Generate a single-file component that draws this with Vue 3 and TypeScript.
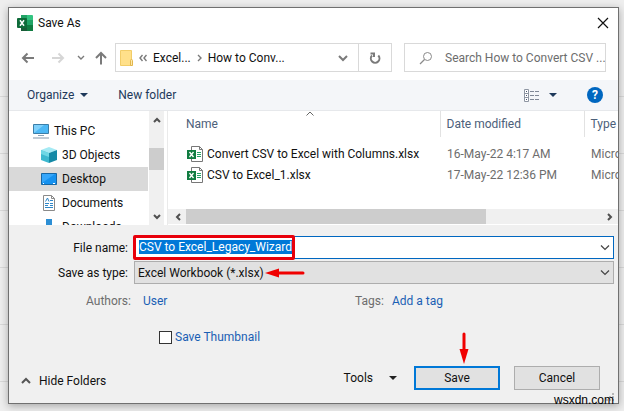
<script setup lang="ts">
import { onMounted, ref } from 'vue'

interface Place {
  name: string
  icon: 'pc' | 'cube' | 'desktop' | 'document' | 'download'
  nested: boolean
}

interface FileRow {
  name: string
  modified: string
  type: string
}

const places: Place[] = [
  { name: 'This PC', icon: 'pc', nested: false },
  { name: '3D Objects', icon: 'cube', nested: true },
  { name: 'Desktop', icon: 'desktop', nested: true },
  { name: 'Documents', icon: 'document', nested: true },
  { name: 'Downloads', icon: 'download', nested: true },
]

const files: FileRow[] = [
  { name: 'Convert CSV to Excel with Columns.xlsx', modified: '16-May-22 4:17 AM', type: 'Micro' },
  { name: 'CSV to Excel_1.xlsx', modified: '17-May-22 12:36 PM', type: 'Micro' },
]

const selectedPlace = ref('Desktop')
const fileName = ref('CSV to Excel_Legacy_Wizard')
const fileType = ref('Excel Workbook (*.xlsx)')
const search = ref('')
const thumbnail = ref(false)
const nameField = ref<HTMLInputElement | null>(null)

onMounted(() => {
  nameField.value?.focus()
  nameField.value?.select()
})
</script>

<template>
  <div class="page">
    <main class="dialog">
      <header class="titlebar">
        <svg class="app-icon" width="16" height="16" viewBox="0 0 16 16">
          <path d="M4 0h6v8H4z" fill="#21a366" />
          <path d="M10 0h5a1 1 0 0 1 1 1v4h-6z" fill="#33c481" />
          <path d="M4 5h6v6H4z" fill="#107c41" />
          <path d="M10 5h6v5h-6z" fill="#21a366" />
          <path d="M10 10h6v6h-6z" fill="#107c41" />
          <path d="M4 10h6v6H4z" fill="#185c37" />
          <rect x="0" y="3" width="10" height="10" rx="1" fill="#0e6b39" />
          <path d="M3 5.2 7 10.8M7 5.2 3 10.8" stroke="#fff" stroke-width="1.5" />
        </svg>
        <h1>Save As</h1>
        <button class="close" aria-label="Close">
          <svg width="12" height="12" viewBox="0 0 12 12">
            <path d="M1 1l10 10M11 1 1 11" stroke="#111" stroke-width="1.2" />
          </svg>
        </button>
      </header>

      <div class="navbar">
        <div class="history">
          <button aria-label="Back">
            <svg width="14" height="12" viewBox="0 0 14 12" class="line">
              <path d="M13 6H2M6.500 1.500 2 6l4.500 4.500" />
            </svg>
          </button>
          <button aria-label="Forward" class="faded">
            <svg width="14" height="12" viewBox="0 0 14 12" class="line">
              <path d="M1 6h11M7.500 1.500 12 6l-4.500 4.500" />
            </svg>
          </button>
          <button aria-label="Recent locations" class="recent">
            <svg width="8" height="12" viewBox="0 0 8 12" class="line thin">
              <path d="M1 4l3 3 3-3" />
            </svg>
          </button>
          <button aria-label="Up">
            <svg width="12" height="14" viewBox="0 0 12 14" class="line">
              <path d="M6 13.500V2M1 7l5-5 5 5" />
            </svg>
          </button>
        </div>
        <nav class="address" aria-label="Address">
          <svg width="14" height="16" viewBox="0 0 14 16">
            <path d="M.5.5h11v15H.5z" fill="#ffe08a" stroke="#f2cd68" />
            <path d="M10.500 10.500q0-1 1-1t1 1v5h-2z" fill="#ffe9a8" stroke="#e2b64d" />
          </svg>
          <svg class="crumb-back line thin" width="8" height="8" viewBox="0 0 8 8">
            <path d="M3.500 1 1 4l2.500 3M7.500 1 5 4l2.500 3" />
          </svg>
          <button class="crumb">Excel...</button>
          <svg class="crumb-next line thin" width="6" height="8" viewBox="0 0 6 8">
            <path d="M1 1l3 3-3 3" />
          </svg>
          <button class="crumb">How to Conv...</button>
          <button class="crumb-menu" aria-label="Previous locations">
            <svg width="10" height="8" viewBox="0 0 10 8" class="line">
              <path d="M1 2l4 4 4-4" />
            </svg>
          </button>
          <button class="refresh" aria-label="Refresh">
            <svg width="12" height="14" viewBox="0 0 12 14" class="line">
              <path d="M3 4.500A4.300 4.300 0 1 0 9.300 4.500" />
              <path d="M1.500 2.500h3.500V6" />
            </svg>
          </button>
        </nav>
        <label class="search">
          <svg width="14" height="14" viewBox="0 0 14 14">
            <circle cx="8.500" cy="5.500" r="4" fill="none" stroke="#8a8a8a" />
            <path d="M5.500 8.500 1 13" stroke="#8a8a8a" stroke-width="1.200" />
          </svg>
          <input v-model="search" type="text" aria-label="Search" placeholder="Search How to Convert CSV ..." />
        </label>
      </div>

      <div class="toolbar">
        <button>Organize <i class="triangle"></i></button>
        <button>New folder</button>
        <button class="view" aria-label="Change view">
          <svg width="16" height="13" viewBox="0 0 16 13">
            <path d="M.5.5h4v12h-4zM.5 4.500h4M.5 8.500h4" fill="#fff" stroke="#8e96a3" />
            <path d="M2 2.500h1M2 6.500h1M2 10.500h1" stroke="#44506a" />
            <path d="M6 2.500h4m1 0h4M6 6.500h4m1 0h4M6 10.500h4m1 0h4" stroke="#808896" />
          </svg>
          <i class="triangle"></i>
        </button>
        <button class="help" aria-label="Help">?</button>
      </div>

      <div class="browser">
        <aside class="places">
          <ul>
            <li v-for="place in places" :key="place.name">
              <button
                :class="{ nested: place.nested, selected: place.name === selectedPlace }"
                @click="selectedPlace = place.name"
              >
                <svg v-if="place.icon === 'pc'" width="16" height="16" viewBox="0 0 16 16">
                  <path d="M.5 1.500h15v9H.5z" fill="#4db8f5" stroke="#3b7ea8" />
                  <path d="M1 10V2h10z" fill="#7fd0fb" />
                  <path d="M5 12.500h6" stroke="#8ba3b5" />
                  <path d="M0 15h16" stroke="#8397aa" />
                </svg>
                <svg v-else-if="place.icon === 'cube'" width="16" height="16" viewBox="0 0 16 16">
                  <path d="M0 3 8 0l8 3-8 3z" fill="#a5eaf4" />
                  <path d="M0 3l8 3v10l-8-3z" fill="#3cb8cf" />
                  <path d="M16 3 8 6v10l8-3z" fill="#1489a6" />
                  <path d="M0 3l8 3v4l-8-3z" fill="#6ed7e5" />
                </svg>
                <svg v-else-if="place.icon === 'desktop'" width="16" height="16" viewBox="0 0 16 16">
                  <path d="M.5 2.500h15v11H.5z" fill="#1591ef" stroke="#1767a5" />
                  <path d="M1 12 14 3H1z" fill="#35a6fa" />
                  <path d="M2 12.500h1m9 0h2" stroke="#fff" />
                </svg>
                <svg v-else-if="place.icon === 'document'" width="16" height="16" viewBox="0 0 16 16">
                  <path d="M2.500.5h8l3 3v12h-11z" fill="#fff" stroke="#8a8a8a" />
                  <path d="M10.500.5v3h3" fill="none" stroke="#8a8a8a" />
                  <path d="M4.500 6.500 6.500 3l1.500 3.500M9 5.500h3M4 8.500h4m1 0h3M4 10.500h3m2 0h3M4 12.500h8" fill="none" stroke="#2f87c8" />
                </svg>
                <svg v-else width="16" height="16" viewBox="0 0 16 16">
                  <path d="M5 0h6v7h3l-6 6-6-6h3z" fill="#2d8fd5" />
                </svg>
                <span>{{ place.name }}</span>
              </button>
            </li>
          </ul>
          <div class="scroll-v">
            <svg width="8" height="6" viewBox="0 0 8 6" class="line scroll-arrow"><path d="M1 5l3-3 3 3" /></svg>
            <div class="thumb"></div>
            <svg width="8" height="6" viewBox="0 0 8 6" class="line scroll-arrow"><path d="M1 1l3 3 3-3" /></svg>
          </div>
        </aside>

        <section class="files">
          <svg class="sort" width="8" height="5" viewBox="0 0 8 5"><path d="M.5 4.500 4 1l3.500 3.500" fill="none" stroke="#666" /></svg>
          <table>
            <thead>
              <tr>
                <th class="col-name">Name</th>
                <th class="col-date">Date modified</th>
                <th class="col-type">Type</th>
              </tr>
            </thead>
            <tbody>
              <tr v-for="file in files" :key="file.name">
                <td class="name">
                  <div class="file">
                    <svg width="16" height="16" viewBox="0 0 16 16">
                      <path d="M4.500.5h8l3 3v12h-11z" fill="#fff" stroke="#777" />
                      <path d="M12.500.5v3h3" fill="none" stroke="#777" />
                      <path d="M10 6.500h4M10 8.500h4M10 10.500h4" stroke="#21a366" />
                      <rect x="0" y="4" width="9" height="9" fill="#107c41" />
                      <path d="M2.500 6l4 5M6.500 6l-4 5" stroke="#fff" stroke-width="1.300" />
                    </svg>
                    <span>{{ file.name }}</span>
                  </div>
                </td>
                <td>{{ file.modified }}</td>
                <td>{{ file.type }}</td>
              </tr>
            </tbody>
          </table>
          <div class="scroll-h">
            <svg width="6" height="8" viewBox="0 0 6 8" class="line scroll-arrow"><path d="M5 1 2 4l3 3" /></svg>
            <div class="track"><div class="thumb"></div></div>
            <svg width="6" height="8" viewBox="0 0 6 8" class="line scroll-arrow"><path d="M1 1l3 3-3 3" /></svg>
          </div>
        </section>
      </div>

      <form class="form" @submit.prevent>
        <div class="field">
          <label for="file-name">File name:</label>
          <div class="combo">
            <input id="file-name" ref="nameField" v-model="fileName" type="text" spellcheck="false" autocomplete="off" />
            <div class="callout"></div>
            <svg class="chevron" width="10" height="6" viewBox="0 0 10 6"><path d="M1 .5l4 4 4-4" /></svg>
          </div>
        </div>
        <div class="field">
          <label for="file-type">Save as type:</label>
          <div class="combo">
            <select id="file-type" v-model="fileType">
              <option>Excel Workbook (*.xlsx)</option>
            </select>
            <svg class="arrow-left" width="40" height="10" viewBox="0 0 40 10">
              <path d="M12 5h26" stroke="#f00000" stroke-width="3" stroke-linecap="round" />
              <path d="M0 5 14 .5v9z" fill="#f00000" />
            </svg>
            <svg class="chevron" width="10" height="6" viewBox="0 0 10 6"><path d="M1 .5l4 4 4-4" /></svg>
          </div>
        </div>
        <dl class="meta">
          <div class="authors">
            <dt>Authors:</dt>
            <dd><a href="#">User</a></dd>
          </div>
          <div class="tags">
            <dt>Tags:</dt>
            <dd><a href="#">Add a tag</a></dd>
          </div>
        </dl>
        <label class="check">
          <input v-model="thumbnail" type="checkbox" />
          <span>Save Thumbnail</span>
        </label>

        <footer class="actions">
          <button type="button" class="plain hide">
            <svg width="10" height="8" viewBox="0 0 10 8" class="line strong"><path d="M1 6l4-4 4 4" /></svg>
            Hide Folders
          </button>
          <button type="button" class="plain tools">Tools <i class="triangle dark"></i></button>
          <div class="save-wrap">
            <svg class="arrow-down" width="10" height="34" viewBox="0 0 10 34">
              <path d="M5 3v17" stroke="#f00000" stroke-width="3" stroke-linecap="round" />
              <path d="M5 33 .5 18h9z" fill="#f00000" />
            </svg>
            <button type="submit" class="push primary">Save</button>
          </div>
          <button type="button" class="push">Cancel</button>
        </footer>
      </form>
      <svg class="grip" width="8" height="8" viewBox="0 0 8 8">
        <path d="M6 0h2v2H6zM3 3h2v2H3zM6 3h2v2H6zM0 6h2v2H0zM3 6h2v2H3zM6 6h2v2H6z" fill="#b8b8b8" />
      </svg>
      <span class="watermark">wsxdn.com</span>
    </main>
  </div>
</template>

<style>
body {
  margin: 0;
}
</style>

<style scoped>
* {
  box-sizing: border-box;
}

.page {
  min-height: 100vh;
  padding: 7px 5px 7px 8px;
  background:
    linear-gradient(#eeeeee, #eeeeee) top / 100% 90px no-repeat,
    repeating-linear-gradient(to bottom, #eeeeee 0 39px, #d9d9d9 39px 40px, #eeeeee 40px 57px);
  color: #111;
  font: 12px/16px Roboto, 'Open Sans', sans-serif;
}

.dialog {
  position: relative;
  border: 1px solid #707070;
  background: #f0f0f0;
  box-shadow: 0 2px 8px rgba(0, 0, 0, 0.3);
}

button,
input,
select {
  margin: 0;
  padding: 0;
  border: 0;
  border-radius: 0;
  background: none;
  color: inherit;
  font: inherit;
}

svg {
  flex: none;
  display: block;
}

.line {
  fill: none;
  stroke: #7a7a7a;
  stroke-width: 2;
}

.thin {
  stroke-width: 1.4;
}

.strong {
  stroke: #555;
}

.triangle {
  width: 0;
  border: 4px solid transparent;
  border-top-color: #1e395b;
  border-bottom: 0;
}

.triangle.dark {
  border-top-color: #222;
}

.titlebar {
  display: flex;
  align-items: center;
  gap: 5px;
  height: 35px;
  padding: 0 9px 6px 8px;
  background: #fff;
}

h1 {
  flex: 1;
  margin: 0;
  font: inherit;
}

.navbar {
  display: flex;
  height: 37px;
  padding: 0 12px 8px 12px;
  background: #fff;
}

.history {
  display: flex;
  align-items: center;
  gap: 10px;
  width: 94px;
}

.history .faded {
  margin: 0 2px 0 6px;
  opacity: 0.3;
}

.address {
  display: flex;
  flex: 1;
  align-items: center;
  border: 1px solid #d9d9d9;
  padding-left: 4px;
}

.crumb-back {
  margin: 0 6px 0 5px;
}

.crumb-next {
  margin: 0 5px 0 6px;
}

.crumb-menu {
  margin-left: auto;
  padding: 0 10px;
}

.refresh {
  display: grid;
  place-items: center;
  align-self: stretch;
  width: 33px;
  border-left: 1px solid #d9d9d9;
}

.search {
  display: flex;
  align-items: center;
  gap: 12px;
  width: 202px;
  margin-left: 12px;
  padding-left: 14px;
  border: 1px solid #d9d9d9;
}

.search input {
  flex: 1;
  min-width: 0;
  outline: 0;
}

.search input::placeholder {
  color: #6d6d6d;
  opacity: 1;
}

.toolbar {
  display: flex;
  align-items: center;
  gap: 30px;
  height: 31px;
  padding: 0 15px 0 18px;
  border-bottom: 1px solid #e6e8eb;
  background: #f4f6f9;
  color: #1e395b;
}

.toolbar button {
  display: flex;
  align-items: center;
  gap: 6px;
}

.toolbar .view {
  gap: 9px;
  margin-left: auto;
}

.toolbar .help {
  justify-content: center;
  width: 16px;
  height: 16px;
  border-radius: 50%;
  background: #0067c0;
  color: #fff;
  font-weight: 700;
}

.browser {
  display: flex;
  height: 114px;
  background: #fff;
}

.places {
  display: flex;
  width: 159px;
  border-right: 1px solid #eaeaea;
}

.places ul {
  flex: 1;
  margin: 0;
  padding: 8px 1px 0 0;
  overflow: hidden;
  list-style: none;
}

.places button {
  display: flex;
  align-items: center;
  gap: 5px;
  width: 100%;
  height: 24px;
  padding-left: 24px;
}

.places .nested {
  padding-left: 32px;
}

.places .selected {
  background: #d9d9d9;
}

.scroll-v {
  display: flex;
  flex-direction: column;
  align-items: center;
  width: 15px;
  margin-right: 3px;
  padding: 6px 0 5px;
  background: #f0f0f0;
}

.scroll-v .thumb {
  width: 100%;
  height: 22px;
  margin: 25px 0 auto;
  background: #cdcdcd;
}

.scroll-arrow {
  stroke: #505050;
}

.files {
  position: relative;
  display: flex;
  flex: 1;
  flex-direction: column;
  min-width: 0;
}

.sort {
  position: absolute;
  top: 0;
  left: 138px;
}

table {
  width: 100%;
  table-layout: fixed;
  border-collapse: collapse;
}

th {
  height: 26px;
  padding: 0 0 0 6px;
  border-left: 1px solid #e2e2e2;
  color: #4c607a;
  font-weight: 400;
  text-align: left;
}

.col-name {
  padding-left: 18px;
  border-left: 0;
}

.col-date {
  width: 144px;
}

.col-type {
  width: 34px;
}

td {
  height: 21px;
  padding: 0 0 0 7px;
  overflow: hidden;
  color: #6d6d6d;
  white-space: nowrap;
}

tbody::before {
  display: block;
  height: 6px;
  content: '';
}

td.name {
  padding-left: 19px;
  color: #111;
}

.file {
  display: flex;
  align-items: center;
  gap: 4px;
}

.scroll-h {
  display: flex;
  align-items: center;
  gap: 5px;
  height: 15px;
  margin-top: auto;
  margin-bottom: 1px;
  padding: 0 5px 0 7px;
  background: #f0f0f0;
}

.track {
  flex: 1;
  height: 100%;
}

.track .thumb {
  width: 72%;
  height: 100%;
  background: #cdcdcd;
}

.form {
  padding: 11px 4px 13px 0;
}

.field {
  display: grid;
  grid-template-columns: 119px 1fr;
  align-items: center;
  gap: 6px;
  margin-bottom: 2px;
}

.field label {
  text-align: right;
}

.combo {
  position: relative;
}

.combo input,
.combo select {
  display: block;
  width: 100%;
  height: 23px;
  padding: 0 24px 1px 4px;
  border: 1px solid #0067c0;
  outline: 0;
  background: #fff;
  appearance: none;
}

.combo select {
  padding: 0 24px 0 3px;
  border-color: #adadad;
  background: #e1e1e1;
}

.combo input::selection {
  background: #0078d7;
  color: #fff;
}

.callout {
  position: absolute;
  top: -1px;
  left: -1px;
  width: 162px;
  height: 25px;
  border: 3px solid #e8000b;
  border-radius: 2px;
  pointer-events: none;
}

.chevron {
  position: absolute;
  top: 9px;
  right: 4px;
  fill: none;
  stroke: #444;
  stroke-width: 1.2;
  pointer-events: none;
}

.arrow-left {
  position: absolute;
  top: 7px;
  left: 131px;
  pointer-events: none;
}

.meta {
  display: flex;
  margin: 9px 0 0;
}

.meta div {
  display: flex;
  gap: 12px;
}

.meta .authors {
  flex: 0 0 269px;
  padding-left: 77px;
}

.meta .tags {
  gap: 8px;
  padding-left: 77px;
}

dt {
  color: #6d6d6d;
}

dd {
  margin: 0;
}

a {
  color: #1a5fb4;
  text-decoration: none;
}

.check {
  display: flex;
  align-items: center;
  gap: 3px;
  width: max-content;
  margin: 20px 0 0 150px;
  color: #1a5fb4;
}

.check input {
  width: 13px;
  height: 13px;
  border: 1px solid #333;
  background: #fff;
  appearance: none;
}

.check input:checked {
  background: #0067c0;
}

.actions {
  display: flex;
  align-items: center;
  margin-top: 21px;
  padding: 0 14px 0 12px;
}

.plain {
  display: flex;
  align-items: center;
}

.hide {
  gap: 8px;
  margin: 6px auto 0 0;
}

.tools {
  gap: 16px;
  margin-right: 17px;
}

.save-wrap {
  position: relative;
  margin-right: 14px;
}

.arrow-down {
  position: absolute;
  bottom: 25px;
  left: 45px;
}

.push {
  display: block;
  width: 86px;
  height: 24px;
  border: 1px solid #adadad;
  background: #e1e1e1;
}

.primary {
  border: 2px solid #0078d7;
}

.grip {
  position: absolute;
  right: 4px;
  bottom: 2px;
}

.watermark {
  position: absolute;
  right: 4px;
  bottom: -5px;
  color: #000;
  font: 12px/16px 'Liberation Sans', sans-serif;
}
</style>
